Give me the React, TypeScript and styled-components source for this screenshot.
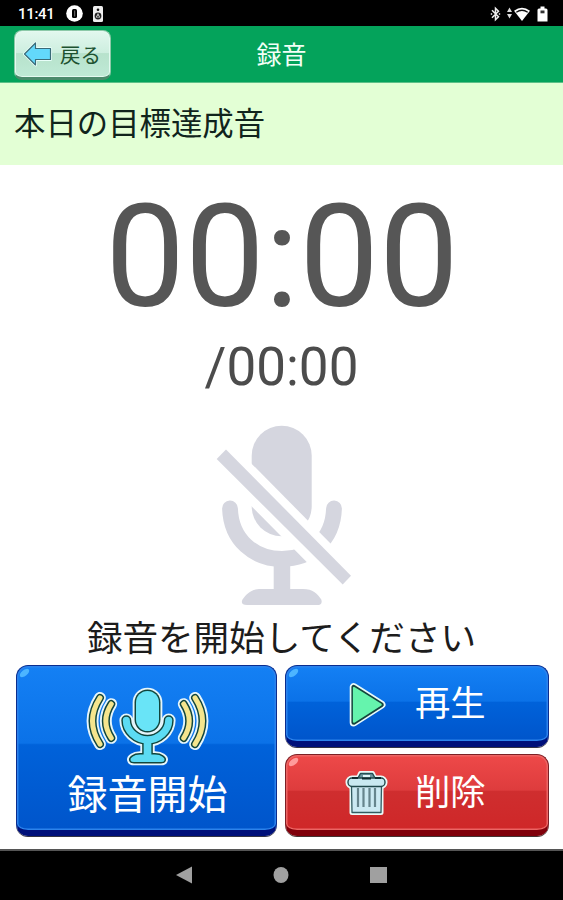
import React from "react";
import styled, { createGlobalStyle, css } from "styled-components";

const GlobalStyle = createGlobalStyle`
  * { box-sizing: border-box; }
  html, body { margin: 0; padding: 0; background: #fff; }
  body { font-family: Roboto, "Noto Sans CJK JP", sans-serif; overflow: hidden; }
`;

const Screen = styled.div`
  width: 563px;
  height: 900px;
  display: flex;
  flex-direction: column;
  background: #fff;
`;

const StatusBar = styled.div`
  height: 26px;
  flex: none;
  display: flex;
  align-items: center;
  justify-content: space-between;
  padding: 1px 15px 0 18px;
  background: #000;
  color: #fff;
`;

const StatusGroup = styled.div<{ $gap: number }>`
  display: flex;
  align-items: center;
  gap: ${(p) => p.$gap}px;
`;

const Clock = styled.span`
  width: 37px;
  font-size: 15px;
  line-height: 20px;
  font-weight: 500;
  letter-spacing: -0.3px;
  margin-right: 1px;
`;

const Header = styled.header`
  height: 57px;
  flex: none;
  display: grid;
  grid-template-columns: 1fr auto 1fr;
  align-items: start;
  padding: 4px 14px 0;
  background: #04a35b;
  border-bottom: 1px solid #5cc088;
`;

const Title = styled.h1`
  margin: 8px 0 0;
  font-size: 25px;
  line-height: 36px;
  font-weight: 400;
  color: #f2fff6;
`;

const BackButton = styled.button`
  width: 97px;
  height: 50px;
  display: flex;
  align-items: center;
  gap: 7px;
  padding: 0 0 0 8px;
  border: 1px solid #8cc9a8;
  border-bottom: 3px solid #4b8b6c;
  border-radius: 8px;
  background: linear-gradient(#e2f8ee 0, #cdeedf 48%, #b7e2cc 49%, #bfead6 100%);
  box-shadow: inset 0 0 0 1px #e4faf0;
  color: #1d5230;
  font: 400 20.5px/28px "Noto Sans CJK JP", sans-serif;
`;

const Subject = styled.div`
  height: 82px;
  flex: none;
  padding: 19px 14px 0;
  background: #e3ffd5;
  color: #10241c;
  font-size: 31.4px;
  line-height: 46px;
`;

const Recorder = styled.main`
  flex: 1;
  display: flex;
  flex-direction: column;
  align-items: center;
`;

const Elapsed = styled.div`
  margin: 10px 0 0 1px;
  height: 166px;
  font-size: 142px;
  line-height: 166px;
  color: #565656;
`;

const Total = styled.div`
  margin-top: -6px;
  height: 64px;
  font-size: 53px;
  line-height: 64px;
  color: #4c4c4c;
`;

const MicArea = styled.div`
  height: 190px;
  margin-top: 21px;
`;

const Message = styled.p`
  margin: 6px 0 0;
  height: 47px;
  font-size: 35.6px;
  line-height: 47px;
  color: #1c1c1c;
`;

const Actions = styled.div`
  width: 533px;
  height: 172px;
  margin: 2px 0 0;
  padding-left: 1px;
  display: grid;
  grid-template-columns: 261px 264px;
  grid-template-rows: 82px 82px;
  column-gap: 8px;
  row-gap: 7px;
`;

const tones = {
  blue: css`
    border-color: #0a2d8f #0a2d8f #00107a;
    background: linear-gradient(#1480f4 0, #0b72e8 47%, #0062da 48%, #0055cb 100%);
    box-shadow: inset 0 0 0 1.5px #2c83ec, 0 1px 0 #334;
  `,
  red: css`
    border-color: #7c2025 #7c2025 #80000b;
    background: linear-gradient(#ee4949 0, #de3c3d 47%, #cf2e2f 48%, #cf2728 100%);
    box-shadow: inset 0 0 0 1.5px #ec6564, 0 1px 0 #433;
  `,
};

const ActionButton = styled.button<{ $tone: "blue" | "red"; $tall?: boolean }>`
  position: relative;
  display: flex;
  align-items: center;
  padding: 0;
  border: 1.5px solid;
  border-bottom-width: 6px;
  border-radius: 12px;
  color: #fff;
  font: 400 35.3px/44px "Noto Sans CJK JP", sans-serif;
  ${(p) => tones[p.$tone]}
  ${(p) =>
    p.$tall
      ? css`
          grid-row: span 2;
          height: 171px;
          padding-top: 17px;
          justify-content: flex-start;
          flex-direction: column;
          font-size: 40px;
          line-height: 50px;
        `
      : css`
          padding-left: 58px;
        `}
`;

const Gloss = styled.span<{ $tone: "blue" | "red" }>`
  position: absolute;
  left: 2px;
  top: 4px;
  width: 11px;
  height: 6px;
  border-radius: 50%;
  transform: rotate(-38deg);
  background: ${(p) => (p.$tone === "blue" ? "#4db5ff" : "#ff9b9b")};
`;

const RecordLabel = styled.span`
  margin: 0 0 0 2px;
`;

const SideLabel = styled.span`
  margin: -5px 0 0 25px;
`;

const NavBar = styled.nav`
  height: 51px;
  flex: none;
  display: flex;
  align-items: center;
  justify-content: center;
  gap: 81px;
  padding-bottom: 2px;
  border-top: 2px solid #555;
  background: #000;
`;

const Icon = styled.svg`
  display: block;
  flex: none;
`;

/* Draws the same outline three times: white halo, dark rim and colour. */
const RIMS = [
  { grow: 6.4, color: "#e6f6fb" },
  { grow: 2.6, color: "#10453c" },
  { grow: -0.3, color: "" },
];

function WaveMic() {
  return (
    <Icon width="130" height="84" viewBox="82 684 130 84" fill="none" strokeLinecap="round" strokeLinejoin="round">
      {RIMS.map((r, i) => (
        <g key={i} stroke={r.color || "#f5e58d"} strokeWidth={5.3 + r.grow}>
          <path d="M100 698.8Q85 722 100 745.2M111.3 705Q100.3 722 111.3 739M195 698.8Q210 722 195 745.2M183.7 705Q194.7 722 183.7 739" />
        </g>
      ))}
      {RIMS.map((r, i) => (
        <g key={i} stroke={r.color || "#5cdcf3"}>
          <path d="M126.3 721.3C126.3 731.5 136 740.8 147.5 740.8S168.7 731.5 168.7 721.3" strokeWidth={7.4 + r.grow} />
          <path d="M147.5 742V757" strokeWidth={8 + r.grow} strokeLinecap="butt" />
          <path d="M133.5 759.3Q136 757.5 140 757.5H155Q159 757.5 161.5 759.3Q164 761 161 761H134Q131 761 133.5 759.3Z" fill={r.color || "#5cdcf3"} strokeWidth={4.3 + r.grow} />
        </g>
      ))}
      {RIMS.map((r, i) => (
        <path key={i} d="M147.5 703.5V720.5" stroke={r.color || "#69e4f7"} strokeWidth={23.3 + r.grow} />
      ))}
    </Icon>
  );
}

function MutedMic() {
  return (
    <Icon width="150" height="190" viewBox="207 420 150 190" fill="#d5d6df">
      <rect x="251.7" y="425.7" width="60" height="110.6" rx="30" />
      <path d="M230 508.5C231 540 254 559 282 559S333 540 334 508.5" fill="none" stroke="#d5d6df" strokeWidth="15.8" strokeLinecap="round" />
      <path d="M273.7 562H290.2V589H303C313 589 317 593.5 321.3 599.5Q323 605 317 605H247Q240 605 242.5 599.5C247 593.5 251 589 261 589H273.7Z" />
      <path d="M211 444L356 590.5" stroke="#fff" strokeWidth="30" />
      <path d="M216.7 459L226 449.5L351 575.7L342.7 584.5Z" />
    </Icon>
  );
}

function PlayIcon() {
  return (
    <Icon width="46" height="50" viewBox="344 678 46 50" strokeLinejoin="round">
      <path d="M353.7 686.2V721.5L381.5 703.7Z" fill="#e9fafa" stroke="#e9fafa" strokeWidth="8" />
      <path d="M353.7 686.2V721.5L381.5 703.7Z" fill="#14443c" stroke="#14443c" strokeWidth="4.6" />
      <path d="M353.9 686.8V720.8L380.8 703.7Z" fill="#65f4ad" stroke="#65f4ad" strokeWidth="2" />
    </Icon>
  );
}

function TrashIcon() {
  return (
    <Icon width="46" height="50" viewBox="344 768 46 50" strokeLinejoin="round">
      <g fill="#eafaf8" stroke="#eafaf8" strokeWidth="5">
        <path d="M352 786H381V812.5H352Z" />
        <path d="M358 779L360.5 773.5H372.5L375 779Z" />
        <rect x="348" y="778" width="37" height="8.5" rx="4" />
      </g>
      <path d="M351.5 786H381.5L381 812.5H352Z" fill="#cbe9f2" stroke="#315b61" strokeWidth="1.3" />
      <path d="M358 788V807M363.5 788V807M369.5 788V807M375 788V807" stroke="#66858d" strokeWidth="2.2" />
      <path d="M358 778L360.5 773.5H372.5L375 778" fill="#6c969e" stroke="#244e52" strokeWidth="1.5" />
      <rect x="363" y="775" width="7" height="3" fill="#dff4f6" />
      <rect x="348" y="778" width="37" height="8.5" rx="4" fill="#c9e9f1" stroke="#20494c" strokeWidth="1.4" />
      <path d="M352 778H358M362 778.5H371M375 778H381" stroke="#102b2e" strokeWidth="1.8" />
    </Icon>
  );
}

export default function App() {
  return (
    <>
      <GlobalStyle />
      <Screen>
        <StatusBar>
          <StatusGroup $gap={10}>
            <Clock>11:41</Clock>
            <Icon width="17" height="17" viewBox="0 0 17 17">
              <circle cx="8.5" cy="8.5" r="8.3" fill="#fff" />
              <rect x="6" y="4" width="5" height="9" rx="1.5" fill="#000" />
              <path d="M8.7 5.5V11.5" stroke="#777" strokeWidth="1" />
            </Icon>
            <Icon width="10" height="16" viewBox="0 0 10 16">
              <rect width="10" height="16" rx="1.5" fill="#eee" />
              <circle cx="5" cy="3.8" r="1.3" fill="#111" />
              <circle cx="5" cy="10" r="3.4" fill="#222" />
              <path d="M5 7L7.3 11.5H2.7Z" fill="#ddd" />
              <circle cx="5" cy="10.4" r=".8" fill="#222" />
            </Icon>
          </StatusGroup>
          <StatusGroup $gap={5}>
            <Icon width="11" height="16" viewBox="0 0 11 16" fill="none" stroke="#eee" strokeWidth="1.5">
              <path d="M2 4.2L8.5 10.8L5.5 13.8V2.2L8.5 5.2L2 11.8" />
              <path d="M0.8 8H2.2M8.8 8H10.2" />
            </Icon>
            <Icon width="26" height="16" viewBox="0 0 26 16">
              <path d="M3.5 1.5L6 6H1ZM3.5 12.5L1 8H6Z" fill="#ddd" />
              <path d="M8 4.7Q16 -1 24 4.7L16 15Z" fill="#fff" />
              <path d="M10.3 6.2Q16 2.3 21.7 6.2" fill="none" stroke="#111" strokeWidth="1.3" />
            </Icon>
            <Icon width="11" height="16" viewBox="0 0 11 16">
              <path d="M3.5 .5H7.5V2.5H9Q10.5 2.5 10.5 4V15.5H.5V4Q.5 2.5 2 2.5H3.5Z" fill="#fff" />
              <rect x="3.5" y="4.5" width="4" height="2.8" fill="#333" />
            </Icon>
          </StatusGroup>
        </StatusBar>

        <Header>
          <BackButton>
            <Icon width="30" height="28" viewBox="0 0 30 28">
              <path d="M1.5 14L12.5 3V8.5H27.5V19.5H12.5V25Z" fill="#6bdcff" stroke="#e8fff9" strokeWidth="3" strokeLinejoin="round" />
              <path d="M1.5 14L12.5 3V8.5H27.5V19.5H12.5V25Z" fill="#63d8fb" stroke="#3a6b78" strokeWidth="1.2" strokeLinejoin="round" />
            </Icon>
            戻る
          </BackButton>
          <Title>録音</Title>
        </Header>

        <Subject>本日の目標達成音</Subject>

        <Recorder>
          <Elapsed>00:00</Elapsed>
          <Total>/00:00</Total>
          <MicArea>
            <MutedMic />
          </MicArea>
          <Message>録音を開始してください</Message>
          <Actions>
            <ActionButton $tone="blue" $tall>
              <Gloss $tone="blue" />
              <WaveMic />
              <RecordLabel>録音開始</RecordLabel>
            </ActionButton>
            <ActionButton $tone="blue">
              <Gloss $tone="blue" />
              <PlayIcon />
              <SideLabel>再生</SideLabel>
            </ActionButton>
            <ActionButton $tone="red">
              <Gloss $tone="red" />
              <TrashIcon />
              <SideLabel>削除</SideLabel>
            </ActionButton>
          </Actions>
        </Recorder>

        <NavBar>
          <Icon width="16" height="18" viewBox="0 0 16 18">
            <path d="M0 9L16 .5V17.5Z" fill="#a0a0a0" />
          </Icon>
          <Icon width="16" height="18" viewBox="0 0 16 18">
            <ellipse cx="8" cy="9" rx="7.5" ry="8" fill="#a0a0a0" />
          </Icon>
          <Icon width="17" height="18" viewBox="0 0 17 18">
            <rect y="1" width="17" height="16" fill="#a0a0a0" />
          </Icon>
        </NavBar>
      </Screen>
    </>
  );
}
